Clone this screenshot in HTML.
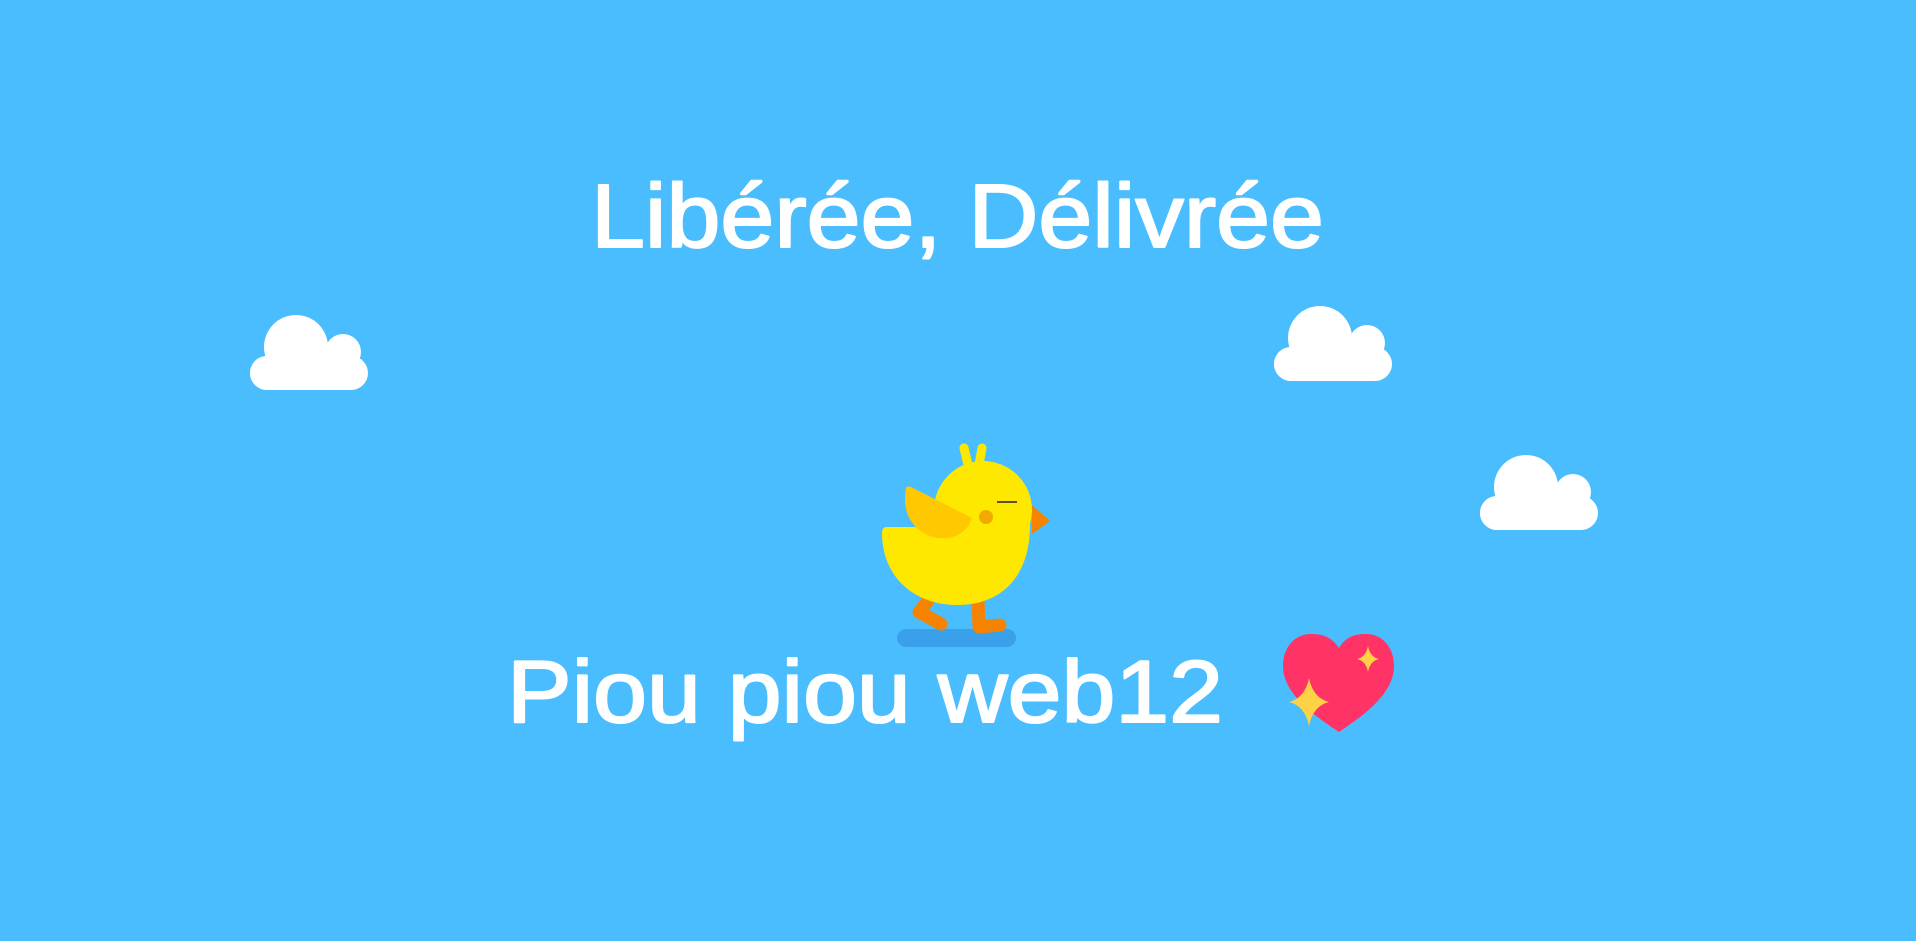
<!DOCTYPE html>
<html><head><meta charset="utf-8"><style>
html,body{margin:0;padding:0;width:1916px;height:941px;overflow:hidden;background:#4abdfe}
svg{position:absolute;left:0;top:0}
</style></head><body>
<svg width="1916" height="941" viewBox="0 0 1916 941">
<defs>
<g id="cloud" fill="#fff">
<circle cx="46" cy="32" r="32"/><circle cx="93" cy="37" r="18"/>
<rect x="0" y="41" width="118" height="34" rx="17"/>
<circle cx="17" cy="58" r="17"/>
</g>
</defs>
<use href="#cloud" x="250" y="315"/>
<use href="#cloud" x="1274" y="306"/>
<use href="#cloud" x="1480" y="455"/>

<g font-family="Liberation Sans, sans-serif" fill="#fff" stroke="#fff" stroke-width="2" stroke-linejoin="round">
<text x="591" y="247" textLength="733" lengthAdjust="spacingAndGlyphs" font-size="90">Libérée, Délivrée</text>
<text x="507" y="722" textLength="716" lengthAdjust="spacingAndGlyphs" font-size="88">Piou piou web12</text>
</g>

<!-- heart -->
<g transform="translate(1283,634)">
<path d="M56,14 C48,2 38,0 28,0 C12,0 0,13 0,32 C0,60 32,82 56,98 C80,82 111,60 111,32 C111,13 99,0 83,0 C73,0 63,2 56,14Z" fill="#ff3366"/>
<path transform="translate(26,68)" d="M0,-24 Q4,-4 20,0 Q4,4 0,24 Q-4,4 -20,0 Q-4,-4 0,-24Z" fill="#ffd246"/>
<path transform="translate(85,25)" d="M0,-13 Q2,-2 11,0 Q2,2 0,13 Q-2,2 -11,0 Q-2,-2 0,-13Z" fill="#ffd246"/>
</g>

<!-- chick -->
<rect x="897" y="629" width="119" height="18" rx="9" fill="#3aa0ea"/>
<path d="M927,602 L919,612 L941,624" stroke="#f58300" stroke-width="13" stroke-linecap="round" stroke-linejoin="round" fill="none"/>
<path d="M978,600 L979,627 L1000,625" stroke="#f58300" stroke-width="13" stroke-linecap="round" stroke-linejoin="round" fill="none"/>
<path d="M968,465 L964,448 M979,465 L982,448" stroke="#ffe800" stroke-width="9" stroke-linecap="round"/>
<path d="M1032,505 L1050,521 L1032,534Z" fill="#f58300"/>
<circle cx="983" cy="510" r="49" fill="#ffe800"/>
<path d="M886,527 L990,527 L1030,525 C1030,578 1000,605 958,605 C912,605 882,575 882,533 C882,529 884,527 886,527Z" fill="#ffe800"/>
<path d="M906,488 C907,486 909,486 911,487 L972,518 C966,536 948,542 930,536 C910,528 902,510 906,488Z" fill="#ffc800"/>
<circle cx="986" cy="517" r="7" fill="#f2a900"/>
<line x1="997" y1="502" x2="1017" y2="502" stroke="#222" stroke-width="1.5"/>
</svg>
</body></html>
